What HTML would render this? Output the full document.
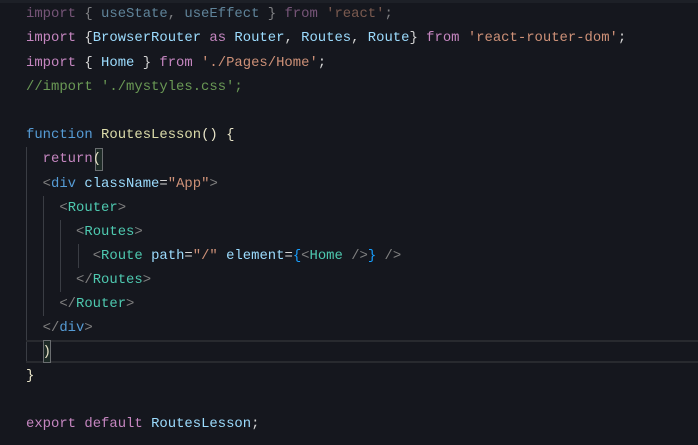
<!DOCTYPE html>
<html><head><style>
html,body{margin:0;padding:0;}
body{width:698px;height:445px;background:#15171e;overflow:hidden;position:relative;font-family:"Liberation Mono",monospace;font-size:13.9px;}
.top{position:absolute;left:0;top:0;width:698px;height:3px;background:#1d2027;}
.l{position:absolute;left:26px;height:24px;line-height:24px;white-space:pre;color:#d4d4d4;}
.k{color:#c586c0}.v{color:#9cdcfe}.s{color:#ce9178}.c{color:#6a9955}.f{color:#dcdcaa}
.t{color:#4ec9b0}.g{color:#808080}.b{color:#569cd6}.y{color:#e8e4c8}.bl{color:#179fff}
.dim{opacity:.55}
.guide{position:absolute;width:1px;background:#3a3d44;}
.cur{position:absolute;left:26px;top:340px;width:672px;height:19px;border-top:2px solid #282a2f;border-bottom:2px solid #282a2f;}
.bx{position:absolute;width:6px;height:21px;border:1px solid #6a6d70;background:#1d2a26;}
</style></head><body>
<div class="top"></div>
<div class="guide" style="left:26px;top:147px;height:216px"></div>
<div class="guide" style="left:43px;top:196px;height:120px"></div>
<div class="guide" style="left:60px;top:220px;height:72px"></div>
<div class="guide" style="left:78px;top:244px;height:24px"></div>
<div class="cur"></div>
<div class="bx" style="left:43px;top:340px"></div>
<div class="bx" style="left:95px;top:148px;height:21px"></div>
<div class="l dim" style="top:2px"><span class="k">import</span> { <span class="v">useState</span>, <span class="v">useEffect</span> } <span class="k">from</span> <span class="s">'react'</span>;</div>
<div class="l" style="top:26px"><span class="k">import</span> {<span class="v">BrowserRouter</span> <span class="k">as</span> <span class="v">Router</span>, <span class="v">Routes</span>, <span class="v">Route</span>} <span class="k">from</span> <span class="s">'react-router-dom'</span>;</div>
<div class="l" style="top:51px"><span class="k">import</span> { <span class="v">Home</span> } <span class="k">from</span> <span class="s">'./Pages/Home'</span>;</div>
<div class="l" style="top:75px"><span class="c">//import './mystyles.css';</span></div>
<div class="l" style="top:123px"><span class="b">function</span> <span class="f">RoutesLesson</span><span class="y">()</span> <span class="y">{</span></div>
<div class="l" style="top:147px">  <span class="k">return</span><span class="y">(</span></div>
<div class="l" style="top:172px">  <span class="g">&lt;</span><span class="b">div</span> <span class="v">className</span>=<span class="s">"App"</span><span class="g">&gt;</span></div>
<div class="l" style="top:196px">    <span class="g">&lt;</span><span class="t">Router</span><span class="g">&gt;</span></div>
<div class="l" style="top:220px">      <span class="g">&lt;</span><span class="t">Routes</span><span class="g">&gt;</span></div>
<div class="l" style="top:244px">        <span class="g">&lt;</span><span class="t">Route</span> <span class="v">path</span>=<span class="s">"/"</span> <span class="v">element</span>=<span class="bl">{</span><span class="g">&lt;</span><span class="t">Home</span> <span class="g">/&gt;</span><span class="bl">}</span> <span class="g">/&gt;</span></div>
<div class="l" style="top:268px">      <span class="g">&lt;/</span><span class="t">Routes</span><span class="g">&gt;</span></div>
<div class="l" style="top:292px">    <span class="g">&lt;/</span><span class="t">Router</span><span class="g">&gt;</span></div>
<div class="l" style="top:316px">  <span class="g">&lt;/</span><span class="b">div</span><span class="g">&gt;</span></div>
<div class="l" style="top:340px">  <span class="y">)</span></div>
<div class="l" style="top:364px"><span class="y">}</span></div>
<div class="l" style="top:412px"><span class="k">export</span> <span class="k">default</span> <span class="v">RoutesLesson</span>;</div>
</body></html>
